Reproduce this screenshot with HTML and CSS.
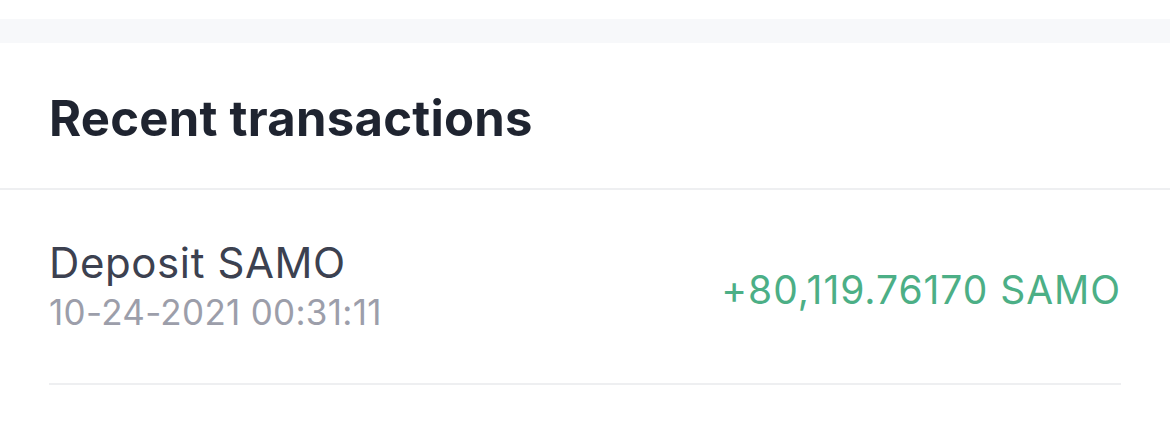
FILE: index.html
```html
<!DOCTYPE html>
<html>
<head>
<meta charset="utf-8">
<link rel="stylesheet" href="styles.css">
</head>
<body>
<div class="page">
  <div class="top"></div>
  <div class="band"></div>
  <section class="card">
    <header class="card-head">
      <h2 class="title">Recent transactions</h2>
    </header>
    <ul class="tx-list">
      <li class="tx">
        <div class="tx-info">
          <div class="tx-name">Deposit SAMO</div>
          <div class="tx-date">10-24-2021 00:31:11</div>
        </div>
        <div class="tx-amount">+80,119.76170 SAMO</div>
      </li>
    </ul>
  </section>
</div>
</body>
</html>
```
FILE: styles.css
```css
html, body {
  margin: 0;
  padding: 0;
  background: #ffffff;
}
.page {
  width: 1170px;
  height: 426px;
  overflow: hidden;
  font-family: "Inter", "Noto Sans", sans-serif;
}
.top {
  height: 19px;
  background: #ffffff;
}
.band {
  height: 24px;
  background: #f7f8fa;
}
.card {
  background: #ffffff;
}
.card-head {
  height: 145px;
  padding: 0 49px;
  display: flex;
  align-items: center;
  border-bottom: 2px solid #eeeff1;
}
.title {
  margin: 0;
  padding-top: 6px;
  font-size: 49px;
  font-weight: 700;
  color: #1f2430;
  letter-spacing: 0.25px;
}
.tx-list {
  list-style: none;
  margin: 0;
  padding: 0 49px;
}
.tx {
  display: flex;
  align-items: center;
  justify-content: space-between;
  height: 193px;
  border-bottom: 2px solid #eeeff1;
}
.tx-info {
  display: flex;
  flex-direction: column;
  gap: 0;
}
.tx-name {
  font-size: 42px;
  line-height: 50px;
  color: #3c4150;
  letter-spacing: 0.6px;
}
.tx-date {
  font-size: 35px;
  line-height: 48px;
  color: #9c9eaa;
  letter-spacing: 0.3px;
}
.tx-amount {
  font-size: 39px;
  color: #4caf86;
  letter-spacing: 0.95px;
  padding-top: 6px;
}
```
